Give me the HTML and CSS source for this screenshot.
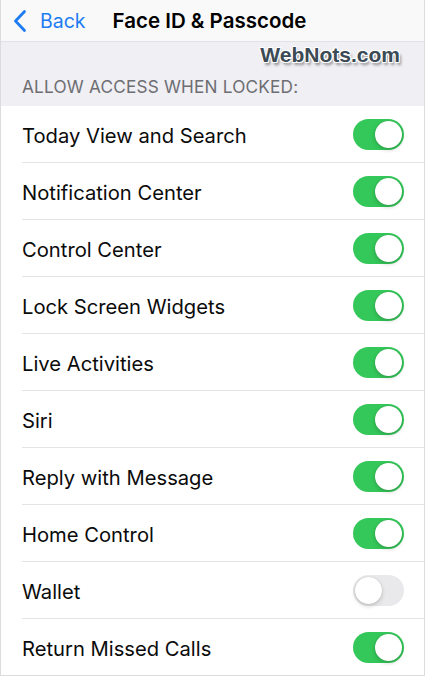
FILE: index.html
```html
<!DOCTYPE html>
<html lang="en">

<head>
    <meta charset="UTF-8">
    <meta name="viewport" content="width=device-width, initial-scale=1.0">
    <title>Face ID &amp; Passcode</title>
    <link rel="stylesheet" href="styles.css">
</head>

<body>
    <div class="screen">
        <!-- Navigation bar -->
        <div class="nav-bar">
            <a class="back" href="#">
                <svg class="chevron" width="14" height="24" viewBox="0 0 14 24">
                    <path d="M11.5 2.5 L2.5 12 L11.5 21.5" fill="none" stroke="#1e7cf2" stroke-width="2.8" stroke-linecap="round" stroke-linejoin="round"/>
                </svg>
                <span>Back</span>
            </a>
            <h1>Face ID &amp; Passcode</h1>
        </div>

        <!-- Section header with watermark -->
        <div class="section-header">
            <span class="watermark">WebNots.com</span>
            <span class="section-title">ALLOW ACCESS WHEN LOCKED:</span>
        </div>

        <ul class="settings-list">
            <li class="row"><span class="label">Today View and Search</span><span class="toggle on"></span></li>
            <li class="row"><span class="label">Notification Center</span><span class="toggle on"></span></li>
            <li class="row"><span class="label">Control Center</span><span class="toggle on"></span></li>
            <li class="row"><span class="label">Lock Screen Widgets</span><span class="toggle on"></span></li>
            <li class="row"><span class="label">Live Activities</span><span class="toggle on"></span></li>
            <li class="row"><span class="label">Siri</span><span class="toggle on"></span></li>
            <li class="row"><span class="label">Reply with Message</span><span class="toggle on"></span></li>
            <li class="row"><span class="label">Home Control</span><span class="toggle on"></span></li>
            <li class="row"><span class="label">Wallet</span><span class="toggle"></span></li>
            <li class="row"><span class="label">Return Missed Calls</span><span class="toggle on"></span></li>
        </ul>
    </div>
</body>

</html>
```

FILE: styles.css
```css
body {
    font-family: Inter, "Noto Sans", sans-serif;
    margin: 0;
    padding: 0;
    background-color: #ffffff;
}

.screen {
    width: 425px;
    height: 676px;
    box-sizing: border-box;
    border: 1px solid #dcdcdc;
    border-top: none;
    overflow: hidden;
    background-color: #ffffff;
}

.nav-bar {
    height: 42px;
    display: flex;
    align-items: center;
    background-color: #f9f9f9;
    border-bottom: 1px solid #e2e2e6;
    box-sizing: border-box;
}

.back {
    display: flex;
    align-items: center;
    color: #1e7cf2;
    text-decoration: none;
    font-size: 19.5px;
    margin-left: 12px;
}

.back .chevron {
    margin-right: 13px;
}

.nav-bar h1 {
    margin: 0 0 0 27px;
    font-size: 20.5px;
    font-weight: 600;
    color: #000000;
}

.section-header {
    height: 64px;
    background-color: #efeff4;
    display: flex;
    flex-direction: column;
    box-sizing: border-box;
    padding: 0 0 0 21px;
}

.watermark {
    align-self: flex-end;
    margin: 2px 24px 0 0;
    font-family: "Liberation Sans", Arial, sans-serif;
    font-weight: bold;
    font-size: 21px;
    color: #3b4a55;
    text-shadow: 1px 1px 0 #fff, -1px -1px 0 #fff, 1px -1px 0 #fff, -1px 1px 0 #fff, 2px 3px 3px rgba(0, 0, 0, 0.45);
    line-height: 22px;
}

.section-title {
    margin-top: 10px;
    font-size: 17.2px;
    color: #6d6d72;
    letter-spacing: 0.2px;
}

.settings-list {
    list-style: none;
    margin: 0;
    padding: 0 0 0 21px;
}

.row {
    height: 57px;
    display: flex;
    align-items: center;
    justify-content: space-between;
    border-bottom: 1px solid #e4e4e8;
    box-sizing: border-box;
    padding-right: 20px;
}

.label {
    font-size: 20.2px;
    color: #0b0b0b;
    padding-top: 3px;
}

.toggle {
    position: relative;
    width: 51px;
    height: 31px;
    border-radius: 16px;
    background-color: #e9e9eb;
    flex-shrink: 0;
}

.toggle::after {
    content: "";
    position: absolute;
    top: 2px;
    left: 2px;
    width: 27px;
    height: 27px;
    border-radius: 50%;
    background-color: #ffffff;
    box-shadow: 0 2px 4px rgba(0, 0, 0, 0.18), 0 0 1px rgba(0, 0, 0, 0.2);
}

.toggle.on {
    background-color: #34c759;
}

.toggle.on::after {
    left: 22px;
}
```
